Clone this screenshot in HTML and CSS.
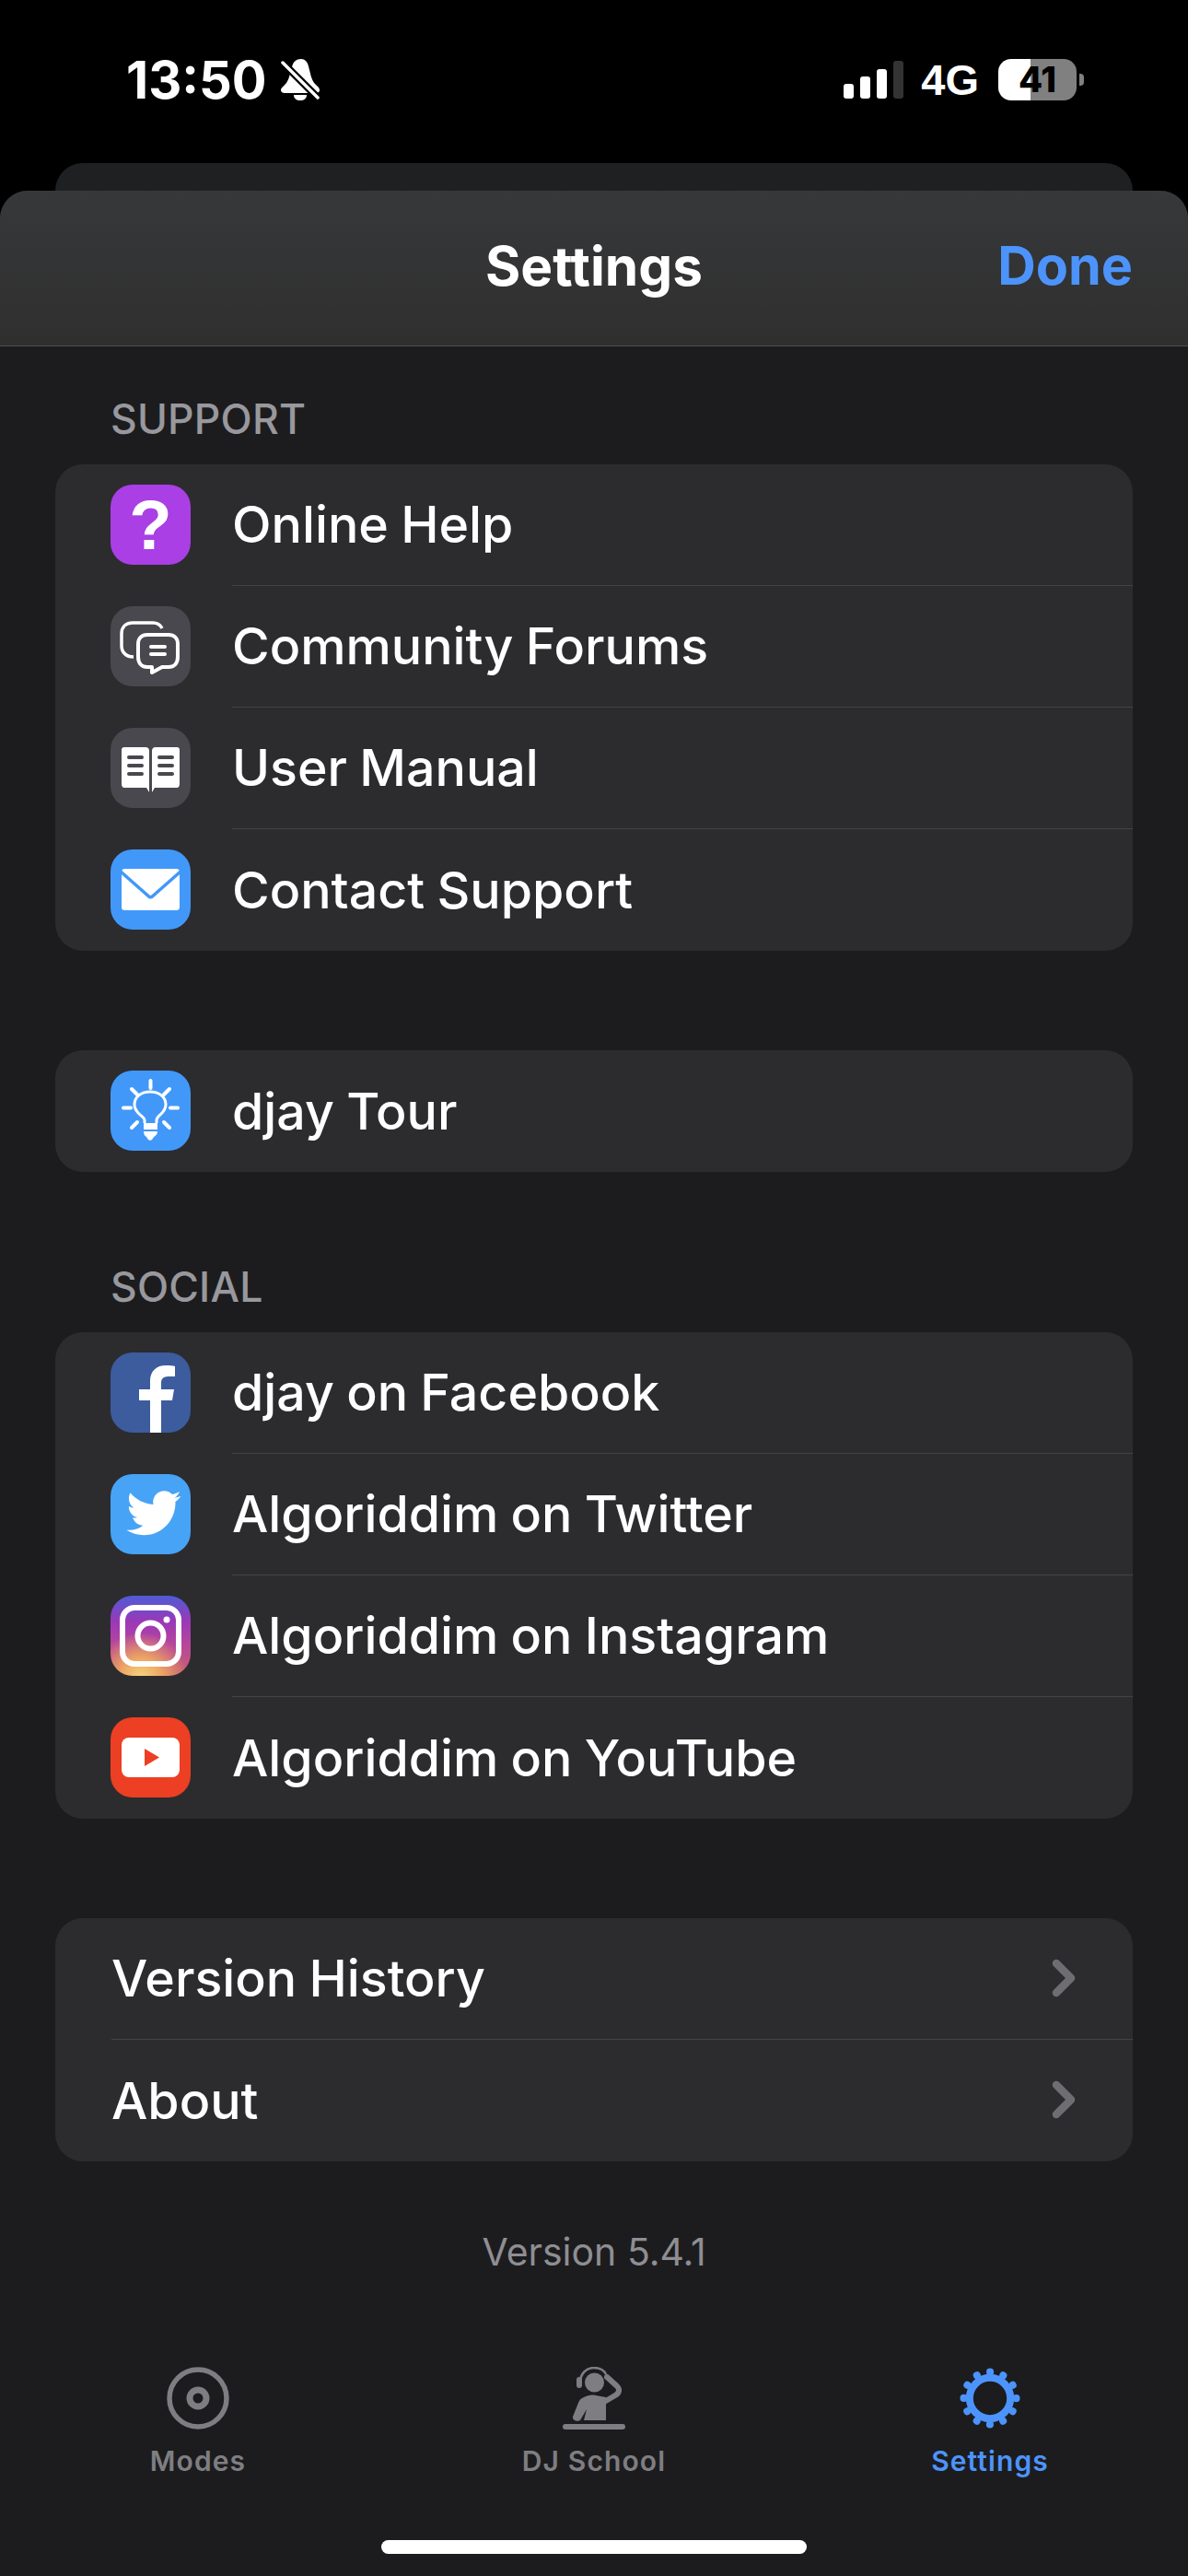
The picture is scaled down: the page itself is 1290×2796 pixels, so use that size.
FILE: index.html
```html
<!DOCTYPE html>
<html lang="en">
<head>
  <meta charset="UTF-8">
  <meta name="viewport" content="width=device-width, initial-scale=1.0">
  <title>Settings</title>
  <link rel="stylesheet" href="styles.css">
</head>
<body>
  <div class="status-bar">
    <div class="status-left">
      <span class="time">13:50</span>
      <svg class="bell" viewBox="0 0 42 45" width="42" height="45">
        <path class="white" d="M22 0C26 0 29 3 30 8C32 15 33 23 37 27C40 30 42 31 42 34C42 36 40 37 38 37H4C2 37 0 36 0 34C0 31 3 30 6 26C9 22 10 15 12 9C13 3 17 0 22 0Z"/>
        <path class="white" d="M14 39H28C28 43 25 45 21 45C17 45 14 43 14 39Z"/>
        <path class="cut" d="M1 3L41 43"/>
        <path class="slash" d="M2 4L40 42"/>
      </svg>
    </div>
    <div class="status-right">
      <div class="signal">
        <span class="bar bar-1"></span>
        <span class="bar bar-2"></span>
        <span class="bar bar-3"></span>
        <span class="bar bar-4"></span>
      </div>
      <span class="network">4G</span>
      <div class="battery-wrap">
        <div class="battery">41</div>
        <span class="battery-nub"></span>
      </div>
    </div>
  </div>

  <div class="back-card"></div>

  <div class="sheet">
    <div class="sheet-header">
      <span></span>
      <span class="sheet-title">Settings</span>
      <span class="done">Done</span>
    </div>

    <div class="sheet-content">
      <div class="section-label">SUPPORT</div>
      <div class="group">
        <div class="row">
          <div class="tile tile-purple"><span class="question">?</span></div>
          <div class="row-body">Online Help</div>
        </div>
        <div class="row">
          <div class="tile tile-gray">
            <svg viewBox="0 0 87 87" width="87" height="87">
              <path class="line-white" stroke-width="3.5" d="M56 24C54 20 51 18 46 18H24C16 18 12 23 12 30V43C12 50 17 55 25 55"/>
              <path class="line-white" stroke-width="4" d="M40 31H63C69 31 73 35 73 41V55C73 62 69 66 63 66H56L45 72V66H40C34 66 30 62 30 55V41C30 35 34 31 40 31Z"/>
              <rect class="fill-white" x="42" y="42" width="19" height="4" rx="2"/>
              <rect class="fill-white" x="42" y="50" width="19" height="4" rx="2"/>
            </svg>
          </div>
          <div class="row-body">Community Forums</div>
        </div>
        <div class="row">
          <div class="tile tile-gray">
            <svg viewBox="0 0 87 87" width="87" height="87">
              <path class="fill-white" d="M15 21H38C41 21 42 23 42 25V70L39 65H15C13 65 12 63 12 61V24C12 22 13 21 15 21Z"/>
              <path class="fill-white" d="M72 21H49C46 21 45 23 45 25V70L48 65H72C74 65 75 63 75 61V24C75 22 74 21 72 21Z"/>
              <g class="fill-tile">
                <rect x="18" y="30" width="18" height="4" rx="2"/>
                <rect x="18" y="39" width="18" height="4" rx="2"/>
                <rect x="18" y="48" width="18" height="4" rx="2"/>
                <rect x="51" y="30" width="18" height="4" rx="2"/>
                <rect x="51" y="39" width="18" height="4" rx="2"/>
                <rect x="51" y="48" width="18" height="4" rx="2"/>
              </g>
            </svg>
          </div>
          <div class="row-body">User Manual</div>
        </div>
        <div class="row">
          <div class="tile tile-blue">
            <svg viewBox="0 0 87 87" width="87" height="87">
              <rect class="fill-white" x="12" y="21" width="63" height="45" rx="3.5"/>
              <path class="mail-fold" d="M11 24L41 50.5C42.5 52 44.500 52 46 50.500L76 24"/>
            </svg>
          </div>
          <div class="row-body">Contact Support</div>
        </div>
      </div>

      <div class="group">
        <div class="row">
          <div class="tile tile-blue">
            <svg viewBox="0 0 87 87" width="87" height="87">
              <path class="line-white" stroke-width="3" d="M37 57V54C37 51 34 50 31 47C28 44 26 41 26 37C26 28 34 23 43 23C52 23 60 28 60 37C60 41 58 44 55 47C52 50 50 51 50 54V57"/>
              <path class="fill-white" d="M36 57H51V66C51 69 49 71 47 72L45 75C44 76 42 76 41 75L39 72C37 71 36 69 36 66Z"/>
              <rect class="fill-blue" x="36" y="64" width="15" height="2"/>
              <path class="line-white" stroke-width="4" stroke-linecap="round" d="M43.5 11V19M14 40.5H22M65 40.5H73M23 20L29 26M64 20L58 26M23 62L29 56M64 62L58 56"/>
            </svg>
          </div>
          <div class="row-body">djay Tour</div>
        </div>
      </div>

      <div class="section-label">SOCIAL</div>
      <div class="group">
        <div class="row">
          <div class="tile tile-facebook">
            <svg viewBox="0 0 87 87" width="87" height="87">
              <path class="fill-white" d="M43 87V52H31V40H43V31C43 20 50 14 60 14C64 14 68 14 70 15V26H63C57 26 55 29 55 33V40H69L67 52H55V87Z"/>
            </svg>
          </div>
          <div class="row-body">djay on Facebook</div>
        </div>
        <div class="row">
          <div class="tile tile-twitter">
            <svg viewBox="0 0 87 87" width="87" height="87">
              <path class="fill-white" transform="translate(15 11) scale(2.6)" d="M23.643 4.937c-.835.37-1.732.62-2.675.733.962-.576 1.7-1.49 2.048-2.578-.9.534-1.897.922-2.958 1.13-.85-.904-2.06-1.47-3.4-1.47-2.572 0-4.658 2.086-4.658 4.66 0 .364.042.718.12 1.06-3.873-.195-7.304-2.05-9.602-4.868-.4.69-.63 1.49-.63 2.342 0 1.616.823 3.043 2.072 3.878-.764-.025-1.482-.234-2.11-.583v.06c0 2.257 1.605 4.14 3.737 4.568-.392.106-.803.162-1.227.162-.3 0-.593-.028-.877-.082.593 1.85 2.313 3.198 4.352 3.234-1.595 1.25-3.604 1.995-5.786 1.995-.376 0-.747-.022-1.112-.065 2.062 1.323 4.51 2.093 7.14 2.093 8.57 0 13.255-7.098 13.255-13.254 0-.2-.005-.402-.014-.602.91-.658 1.7-1.477 2.323-2.41z"/>
            </svg>
          </div>
          <div class="row-body">Algoriddim on Twitter</div>
        </div>
        <div class="row">
          <div class="tile tile-instagram">
            <svg viewBox="0 0 87 87" width="87" height="87">
              <rect class="line-white" stroke-width="6" x="13" y="13" width="61" height="61" rx="13"/>
              <circle class="line-white" stroke-width="6" cx="43.5" cy="43.5" r="14"/>
              <circle class="fill-white" cx="61" cy="26" r="3.5"/>
            </svg>
          </div>
          <div class="row-body">Algoriddim on Instagram</div>
        </div>
        <div class="row">
          <div class="tile tile-youtube">
            <svg viewBox="0 0 87 87" width="87" height="87">
              <rect class="fill-white" x="12" y="22" width="63" height="43" rx="8"/>
              <path class="fill-red" d="M37 34L53 43.5L37 53Z"/>
            </svg>
          </div>
          <div class="row-body">Algoriddim on YouTube</div>
        </div>
      </div>

      <div class="group group-last">
        <div class="row row-plain">
          <div class="row-body">
            Version History
            <svg class="chevron" viewBox="0 0 26 42" width="26" height="42"><path d="M5 5L21 21L5 37"/></svg>
          </div>
        </div>
        <div class="row row-plain">
          <div class="row-body">
            About
            <svg class="chevron" viewBox="0 0 26 42" width="26" height="42"><path d="M5 5L21 21L5 37"/></svg>
          </div>
        </div>
      </div>

      <div class="version">Version 5.4.1</div>
    </div>

    <div class="tab-bar">
      <div class="tab">
        <svg viewBox="0 0 68 68" width="68" height="68">
          <circle class="tab-line" stroke-width="5.5" cx="34" cy="34" r="31"/>
          <circle class="tab-line" stroke-width="7" cx="34" cy="34" r="9"/>
        </svg>
        <span class="tab-label">Modes</span>
      </div>
      <div class="tab">
        <svg viewBox="0 0 68 68" width="68" height="68">
          <circle class="tab-fill" cx="34.5" cy="17" r="10.5"/>
          <path class="tab-line" stroke-width="2.5" d="M19 17C19 7 26 1 34 1C40 1 45 4 47 8"/>
          <rect class="tab-fill" x="15" y="11" width="6" height="12" rx="3"/>
          <path class="tab-line" stroke-width="6" stroke-linecap="round" d="M45 38L57 31C62 28 62 24 59 21L48 11"/>
          <path class="tab-fill" d="M23 33C27 31 31 30 36 31L47 33V58H23L26 46L19 58C16 60 10 58 11 54L17 39C18 36 20 34 23 33Z"/>
          <rect class="tab-fill" x="0" y="62" width="68" height="6" rx="3"/>
        </svg>
        <span class="tab-label">DJ School</span>
      </div>
      <div class="tab tab-active">
        <svg viewBox="0 0 68 68" width="68" height="68">
          <circle class="gear-ring" cx="34" cy="34" r="22.2"/>
          <circle class="gear-teeth" cx="34" cy="34" r="28.5" pathLength="120"/>
        </svg>
        <span class="tab-label">Settings</span>
      </div>
    </div>

    <div class="home-indicator"></div>
  </div>
</body>
</html>
```

FILE: styles.css
```css
* {
  box-sizing: border-box;
}
html, body {
  margin: 0;
  padding: 0;
}
body {
  width: 1290px;
  height: 2796px;
  overflow: hidden;
  background-color: #000;
  color: #fff;
  font-family: Inter, "Liberation Sans", sans-serif;
  display: flex;
  flex-direction: column;
}

/* status bar */
.status-bar {
  height: 177px;
  padding: 0 113px 4px 137px;
  display: flex;
  align-items: center;
  justify-content: space-between;
}
.status-left, .status-right {
  display: flex;
  align-items: center;
}
.time {
  font-size: 56px;
  font-weight: 700;
  line-height: 60px;
}
.bell {
  margin-left: 15px;
}
.white {
  fill: #fff;
}
.cut {
  stroke: #000;
  stroke-width: 8;
  fill: none;
}
.slash {
  stroke: #fff;
  stroke-width: 3.5;
  stroke-linecap: round;
  fill: none;
}
.signal {
  display: flex;
  align-items: flex-end;
  gap: 7px;
  height: 41px;
}
.bar {
  width: 11px;
  background-color: #fff;
  border-radius: 3px;
}
.bar-1 { height: 16px; }
.bar-2 { height: 24px; }
.bar-3 { height: 32px; }
.bar-4 { height: 41px; background-color: #333; }
.network {
  margin-left: 19px;
  font-family: "Liberation Sans", sans-serif;
  font-size: 47px;
  font-weight: 700;
  line-height: 50px;
}
.battery-wrap {
  margin-left: 21px;
  display: flex;
  align-items: center;
  gap: 3px;
}
.battery {
  width: 85px;
  height: 45px;
  border-radius: 14px;
  background: linear-gradient(90deg, #fff 41%, #808080 41%);
  color: #000;
  font-size: 38px;
  font-weight: 800;
  line-height: 45px;
  text-align: center;
}
.battery-nub {
  width: 5px;
  height: 13px;
  border-radius: 0 4px 4px 0;
  background-color: #808080;
}

/* sheets */
.back-card {
  height: 30px;
  margin: 0 60px;
  background-color: #1f2022;
  border-radius: 30px 30px 0 0;
  flex-shrink: 0;
}
.sheet {
  flex: 1;
  display: flex;
  flex-direction: column;
  background-color: #1c1c1e;
  border-radius: 30px 30px 0 0;
  overflow: hidden;
}
.sheet-header {
  height: 169px;
  padding: 0 60px 6px;
  display: grid;
  grid-template-columns: 1fr auto 1fr;
  align-items: center;
  background: linear-gradient(180deg, #37383a, #2f2f2f);
  border-bottom: 1px solid #4e4e4e;
}
.sheet-title {
  font-size: 58.5px;
  font-weight: 700;
}
.done {
  justify-self: end;
  font-size: 57.5px;
  font-weight: 700;
  color: #4c94fb;
}
.sheet-content {
  padding: 62px 60px 0;
}

/* settings lists */
.section-label {
  height: 34px;
  margin-bottom: 32px;
  padding-left: 60px;
  font-size: 44.5px;
  font-weight: 500;
  letter-spacing: 0.2px;
  line-height: 34px;
  color: #98989d;
}
.group {
  margin-bottom: 108px;
  background-color: #2c2c2e;
  border-radius: 30px;
  overflow: hidden;
}
.group-last {
  margin-bottom: 73px;
}
.row {
  height: 132px;
  padding-left: 60px;
  display: flex;
  align-items: center;
  gap: 45px;
}
.row-plain {
  padding-left: 61px;
}
.row-body {
  flex: 1;
  height: 132px;
  padding-right: 62px;
  padding-bottom: 2px;
  display: flex;
  align-items: center;
  justify-content: space-between;
  font-size: 55.5px;
  font-weight: 500;
  word-spacing: -1.5px;
  border-bottom: 1px solid #434345;
}
.row:last-child .row-body {
  border-bottom: none;
}
.chevron path {
  fill: none;
  stroke: #6d6d72;
  stroke-width: 8.5;
  stroke-linecap: round;
  stroke-linejoin: round;
}

/* icon tiles */
.tile {
  width: 87px;
  height: 87px;
  margin-bottom: 1px;
  border-radius: 24px;
  display: flex;
  align-items: center;
  justify-content: center;
  overflow: hidden;
  flex-shrink: 0;
}
.tile svg {
  display: block;
}
.tile-purple { background-color: #a93fe4; }
.tile-gray { background-color: #48484e; }
.tile-blue { background-color: #4298f9; }
.tile-facebook { background-color: #3c5c9e; }
.tile-twitter { background-color: #47a3f5; }
.tile-youtube { background-color: #ec3f23; }
.tile-instagram {
  background:
    radial-gradient(circle at 38% 104%, #f6d97e 0, #eda564 22%, rgba(226, 120, 90, 0) 48%),
    linear-gradient(180deg, #4f5cd6 0, #9a38b8 32%, #b8469a 62%, #c9626e 100%);
}
.question {
  font-family: "Liberation Sans", sans-serif;
  font-size: 76px;
  font-weight: 700;
  line-height: 87px;
}
.fill-white { fill: #fff; }
.fill-tile { fill: #48484e; }
.fill-blue { fill: #4298f9; }
.fill-red { fill: #ec3f23; }
.line-white {
  fill: none;
  stroke: #fff;
  stroke-linejoin: round;
}
.mail-fold {
  fill: none;
  stroke: #4298f9;
  stroke-width: 3.5;
}

.version {
  height: 50px;
  font-size: 41px;
  line-height: 50px;
  text-align: center;
  color: #8e8e93;
}

/* tab bar */
.tab-bar {
  margin-top: auto;
  display: grid;
  grid-template-columns: repeat(3, 430px);
}
.tab {
  display: flex;
  flex-direction: column;
  align-items: center;
}
.tab svg {
  display: block;
}
.tab-label {
  margin-top: 16px;
  font-size: 30px;
  font-weight: 600;
  line-height: 36px;
  letter-spacing: 1.1px;
  color: #7e7e82;
}
.tab-active .tab-label {
  color: #4c94fb;
}
.tab-line {
  fill: none;
  stroke: #7e7e82;
}
.tab-fill {
  fill: #7e7e82;
}
.gear-ring {
  fill: none;
  stroke: #4c94fb;
  stroke-width: 8;
}
.gear-teeth {
  fill: none;
  stroke: #4c94fb;
  stroke-width: 8;
  stroke-linecap: round;
  stroke-dasharray: 0.1 9.9;
}
.home-indicator {
  width: 462px;
  height: 15px;
  margin: 68px auto 24px;
  background-color: #fff;
  border-radius: 8px;
}
```
